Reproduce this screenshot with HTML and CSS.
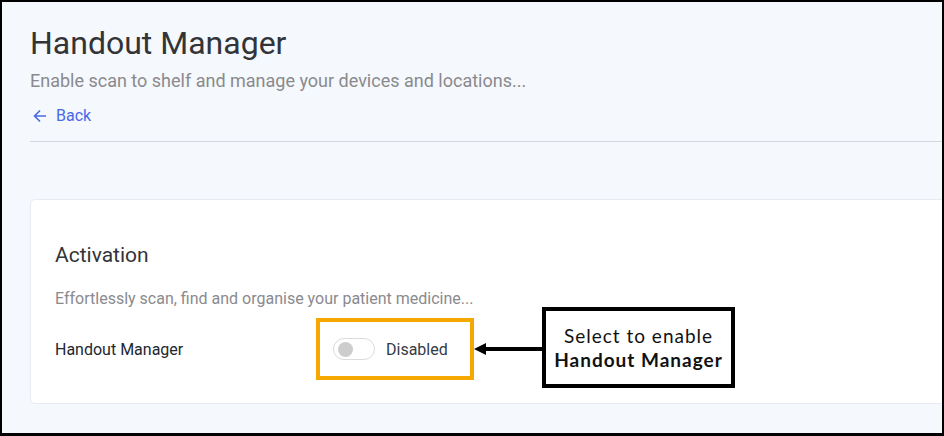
FILE: index.html
```html
<!DOCTYPE html>
<html lang="en">
<head>
<meta charset="utf-8">
<title>Handout Manager</title>
<link rel="stylesheet" href="styles.css">
</head>
<body>
<div class="frame">
  <div class="page">
    <header class="page-header">
      <h1 class="title">Handout Manager</h1>
      <p class="subtitle">Enable scan to shelf and manage your devices and locations...</p>
      <a class="back" href="#">
        <svg class="back-icon" width="14" height="14" viewBox="0 0 14 14" aria-hidden="true">
          <path d="M13 7H1.8M7 1.5L1.5 7L7 12.5" fill="none" stroke="currentColor" stroke-width="1.6"/>
        </svg>
        <span>Back</span>
      </a>
    </header>
    <hr class="divider">
    <section class="card">
      <h2 class="card-title">Activation</h2>
      <p class="card-desc">Effortlessly scan, find and organise your patient medicine...</p>
      <div class="row">
        <div class="row-label">Handout Manager</div>
        <div class="highlight">
          <span class="toggle"><span class="knob"></span></span>
          <span class="toggle-text">Disabled</span>
        </div>
        <div class="arrow">
          <span class="arrow-head"></span>
          <span class="arrow-line"></span>
        </div>
        <div class="callout">
          <div>Select to enable</div>
          <div class="callout-strong">Handout Manager</div>
        </div>
      </div>
    </section>
  </div>
</div>
</body>
</html>
```
FILE: styles.css
```css
* { box-sizing: border-box; }
html, body { margin: 0; padding: 0; }
body {
  font-family: Roboto, "Liberation Sans", sans-serif;
  background: #ffffff;
}
.frame {
  width: 944px;
  height: 436px;
  border: 2px solid #000;
  border-bottom-width: 3px;
  background: #f5f8fc;
  overflow: hidden;
}
.page {
  padding: 21px 0 0 28px;
}
.title {
  margin: 0;
  font-size: 32px;
  font-weight: 400;
  line-height: 40px;
  color: #333437;
}
.subtitle {
  margin: 6px 0 0;
  font-size: 18px;
  line-height: 24px;
  color: #8a8a8e;
}
.back {
  display: inline-flex;
  align-items: center;
  gap: 9px;
  margin-top: 13px;
  font-size: 16px;
  line-height: 20px;
  color: #4a68e8;
  text-decoration: none;
}
.back-icon { margin-left: 3px; }
.divider {
  margin: 14px 0 0;
  border: 0;
  border-top: 1px solid #d3d7de;
  height: 0;
}
.card {
  margin-top: 57px;
  margin-right: -12px;
  background: #fff;
  border: 1px solid #e7ebf3;
  border-radius: 5px;
  padding: 41px 0 20px 24px;
  height: 205px;
}
.card-title {
  margin: 0;
  font-size: 21px;
  font-weight: 400;
  line-height: 28px;
  color: #333437;
}
.card-desc {
  margin: 19px 0 0;
  font-size: 16px;
  line-height: 22px;
  color: #8a8a8e;
}
.row {
  display: flex;
  align-items: center;
  margin-top: 0;
}
.row-label {
  width: 261px;
  font-size: 16px;
  color: #222730;
}
.highlight {
  display: flex;
  align-items: center;
  width: 158px;
  height: 62px;
  border: 4px solid #f5a800;
  padding-left: 13px;
}
.toggle {
  position: relative;
  display: inline-block;
  width: 42px;
  height: 22px;
  border: 1px solid #dcdcdc;
  border-radius: 11px;
  background: #fff;
}
.knob {
  position: absolute;
  left: 4px;
  top: 2.5px;
  width: 15px;
  height: 15px;
  border-radius: 50%;
  background: #cdcdcd;
}
.toggle-text {
  margin-left: 11px;
  font-size: 16px;
  color: #333a45;
}
.arrow {
  display: flex;
  align-items: center;
  width: 68px;
}
.arrow-head {
  width: 0;
  height: 0;
  border-top: 6px solid transparent;
  border-bottom: 6px solid transparent;
  border-right: 12px solid #000;
}
.arrow-line {
  flex: 1;
  height: 4px;
  background: #000;
}
.callout {
  width: 193px;
  height: 81px;
  border: 4px solid #000;
  background: #fff;
  display: flex;
  flex-direction: column;
  justify-content: center;
  align-items: center;
  font-family: Lato, "DejaVu Sans", sans-serif;
  font-size: 19px;
  letter-spacing: 1px;
  line-height: 24px;
  color: #111;
  margin-top: -3px;
}
.callout-strong { font-weight: 700; }
```
